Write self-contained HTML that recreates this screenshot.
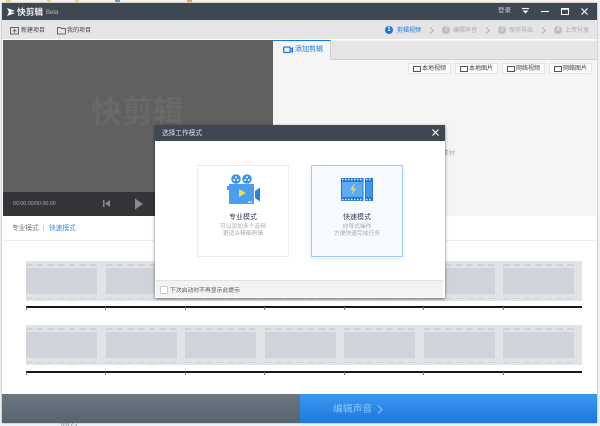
<!DOCTYPE html>
<html lang="zh">
<head>
<meta charset="utf-8">
<style>
html,body{margin:0;padding:0;width:600px;height:426px;overflow:hidden;background:#f1f2f3}
body{position:relative;font-family:"Liberation Sans","Noto Sans CJK SC",sans-serif;font-size:8px;color:#555}
.a{position:absolute}
.t{position:absolute;white-space:nowrap;line-height:10px}
.btn{position:absolute;top:63px;height:9px;background:#fbfbfb;border:1px solid #e4e4e4;width:41px}
.btn span{position:absolute;left:13px;top:1px;font-size:6px;line-height:9px;color:#444;white-space:nowrap}
.btn i{position:absolute;left:4px;top:2px;width:6px;height:4px;border:1px solid #555}
.step{position:absolute;top:26px;width:8px;height:8px;border-radius:50%;background:#bdbdbd;color:#eee;font-size:6px;line-height:8px;text-align:center}
.sl{position:absolute;top:26px;font-size:6px;line-height:10px;color:#aaa;white-space:nowrap}
.chev{position:absolute;top:28px;width:4px;height:4px;border-top:1px solid #b0b0b0;border-right:1px solid #b0b0b0;transform:rotate(45deg)}
.strip{position:absolute;left:26px;width:556px;height:40px;background:#e1e4e6;overflow:hidden}
.strip .f{position:absolute;top:7px;width:71px;height:26px;background:#d0d4da}
.strip .f::before,.strip .f::after{content:"";position:absolute;left:0;width:71px;height:1.500px;background:repeating-linear-gradient(90deg,#ced2d6 0 6.300px,transparent 6.300px 10.700px)}
.strip .f::before{top:-4px}
.strip .f::after{bottom:-5px}
.line{position:absolute;left:26px;width:556px;height:1.500px;background:#15181d}
.tick{position:absolute;width:1px;height:3px;background:#777}
.card{position:absolute;top:165px;width:92px;height:92px;box-sizing:border-box}
</style>
</head>
<body>
<!-- browser strip behind -->
<div class="a" style="left:0;top:0;width:600px;height:3px;background:#f4f2ea"></div>
<div class="a" style="left:6px;top:0;width:5px;height:2px;background:#f0d488"></div>
<div class="a" style="left:47px;top:0;width:4px;height:2px;background:#f0d488"></div>
<div class="a" style="left:75px;top:0;width:4px;height:2px;background:#f0d488"></div>
<div class="a" style="left:115px;top:0;width:5px;height:2px;background:#5a9be0"></div>
<div class="a" style="left:187px;top:0;width:5px;height:2px;background:#e6a75c"></div>
<div class="t" style="left:60px;top:421px;font-size:6px;color:#666">2017 &#8250;</div>

<!-- window -->
<div class="a" style="left:2px;top:3px;width:595px;height:420px;background:#fff;box-shadow:0 0 1.500px #888"></div>

<!-- title bar -->
<div class="a" style="left:2px;top:3px;width:595px;height:17px;background:#3f4852"></div>
<svg class="a" style="left:7px;top:8px" width="9" height="8" viewBox="0 0 9 8"><path d="M0 0l8 3-5 1 5 1-8 3 2-4z" fill="#fff"/></svg>
<div class="t" style="left:17px;top:7px;font-size:8.700px;font-weight:bold;color:#eee;line-height:10px">快剪辑</div>
<div class="t" style="left:46px;top:8px;font-size:6px;color:#bbb">Beta</div>
<div class="t" style="left:498px;top:6px;font-size:6.500px;color:#ccc">登录</div>
<svg class="a" style="left:520px;top:5px" width="77" height="13" viewBox="0 0 77 13" fill="none" stroke="#fff">
<path d="M2 3.500h7" stroke-width="1.100"/><path d="M2.500 5.500h6l-3 3z" fill="#fff" stroke="none"/>
<path d="M21 6.500h8" stroke-width="1.100"/>
<rect x="41.500" y="3.500" width="7" height="6" stroke-width="1"/><path d="M41 4h8" stroke-width="1.500"/>
<path d="M61.500 3.500l6 6M67.500 3.500l-6 6" stroke-width="1.100"/>
</svg>

<!-- toolbar -->
<div class="a" style="left:2px;top:20px;width:595px;height:19px;background:#e5e5e5"></div>
<svg class="a" style="left:10px;top:26px" width="60" height="9" viewBox="0 0 60 9" fill="none" stroke="#666"><rect x=".5" y="1.500" width="8" height="6.500"/><path d="M2.500 4.700h4M4.500 2.800v4"/><path d="M47.500 1.500h3l1 1h4v5.500h-8z"/></svg>
<div class="t" style="left:21px;top:26px;font-size:6px;color:#444">新建项目</div>
<div class="t" style="left:67px;top:26px;font-size:6px;color:#444">我的项目</div>

<div class="step" style="left:385px;background:#1678e0;color:#fff;font-weight:bold">1</div>
<div class="sl" style="left:397px;color:#1678e0">剪辑视频</div>
<div class="chev" style="left:428px"></div>
<div class="step" style="left:442px">2</div>
<div class="sl" style="left:453px">编辑声音</div>
<div class="chev" style="left:484px"></div>
<div class="step" style="left:498px">3</div>
<div class="sl" style="left:509px">保存导出</div>
<div class="chev" style="left:540px"></div>
<div class="step" style="left:554px">4</div>
<div class="sl" style="left:565px">上传分享</div>

<!-- video panel -->
<div class="a" style="left:3px;top:40px;width:270px;height:152px;background:#606060"></div>
<div class="t" style="left:91px;top:96px;font-size:31px;line-height:34px;font-weight:bold;color:#696969">快剪辑</div>
<div class="a" style="left:3px;top:192px;width:270px;height:24px;background:#333538"></div>
<div class="t" style="left:13px;top:199px;font-size:5.300px;color:#aaa">00:00.00/00:00.00</div>
<svg class="a" style="left:102px;top:198px" width="44" height="12" viewBox="0 0 44 12" fill="#8a8a8a"><path d="M1 2h1.500v7H1zM8 2v7L3 5.500z"/><path d="M33 .5l8 5.500-8 5.500z"/></svg>

<!-- right panel -->
<div class="a" style="left:273px;top:40px;width:324px;height:176px;background:#f5f5f5"></div>
<div class="a" style="left:273px;top:41px;width:324px;height:18px;background:#e6e6e6;border-bottom:1px solid #cfcfcf"></div>
<div class="a" style="left:273px;top:40px;width:58px;height:20px;background:#f5f5f5;border-top:1px solid #1678e0;border-right:1px solid #cfcfcf;box-sizing:border-box"></div>
<svg class="a" style="left:283px;top:46px" width="10" height="8" viewBox="0 0 10 8" fill="none" stroke="#1678e0" stroke-width="1.300"><rect x=".7" y="1" width="6.500" height="5.500" rx="1"/><path d="M8 3l1.500-1v4L8 5"/></svg>
<div class="t" style="left:295px;top:45px;font-size:7px;color:#1678e0">添加剪辑</div>

<div class="btn" style="left:408px"><i></i><span>本地视频</span></div>
<div class="btn" style="left:455px"><i></i><span>本地图片</span></div>
<div class="btn" style="left:502px"><i></i><span>网络视频</span></div>
<div class="btn" style="left:549px"><i></i><span>网络图片</span></div>
<div class="t" style="left:443px;top:149px;font-size:6px;color:#aaa">素材</div>

<!-- mode tabs -->
<div class="t" style="left:12px;top:224px;font-size:6.700px;color:#777">专业模式</div>
<div class="a" style="left:43px;top:225px;width:1px;height:6px;background:#ccc"></div>
<div class="t" style="left:49px;top:224px;font-size:6.700px;color:#3b8fe8">快速模式</div>
<div class="a" style="left:3px;top:240px;width:594px;height:1px;background:#eee"></div>

<!-- timeline 1 -->
<div class="strip" style="top:261px">
<div class="f" style="left:0"></div><div class="f" style="left:79.500px"></div><div class="f" style="left:159px"></div><div class="f" style="left:238.500px"></div><div class="f" style="left:318px"></div><div class="f" style="left:397.500px"></div><div class="f" style="left:477px"></div>
</div>
<div class="line" style="top:306px"></div>
<div class="tick" style="left:26px;top:307px"></div><div class="tick" style="left:105px;top:307px"></div><div class="tick" style="left:185px;top:307px"></div><div class="tick" style="left:264px;top:307px"></div><div class="tick" style="left:344px;top:307px"></div><div class="tick" style="left:423px;top:307px"></div><div class="tick" style="left:503px;top:307px"></div>

<!-- timeline 2 -->
<div class="strip" style="top:325px">
<div class="f" style="left:0"></div><div class="f" style="left:79.500px"></div><div class="f" style="left:159px"></div><div class="f" style="left:238.500px"></div><div class="f" style="left:318px"></div><div class="f" style="left:397.500px"></div><div class="f" style="left:477px"></div>
</div>
<div class="line" style="top:371px"></div>
<div class="tick" style="left:26px;top:372px"></div><div class="tick" style="left:105px;top:372px"></div><div class="tick" style="left:185px;top:372px"></div><div class="tick" style="left:264px;top:372px"></div><div class="tick" style="left:344px;top:372px"></div><div class="tick" style="left:423px;top:372px"></div><div class="tick" style="left:503px;top:372px"></div>

<!-- bottom bar -->
<div class="a" style="left:2px;top:394px;width:298px;height:29px;background:linear-gradient(#6b7783,#57636f)"></div>
<div class="a" style="left:300px;top:394px;width:297px;height:29px;background:linear-gradient(#3a98f2,#1f78dc)"></div>
<div class="t" style="left:333px;top:404px;font-size:9.800px;line-height:12px;color:#8fc6f7">编辑声音</div>
<svg class="a" style="left:377px;top:405px" width="6" height="9" viewBox="0 0 6 9" fill="none" stroke="#8fc6f7"><path d="M1 .5l4 4-4 4"/></svg>

<!-- modal -->
<div class="a" style="left:155px;top:125px;width:290px;height:173px;background:#fff;box-shadow:0 1px 3px rgba(0,0,0,.55)"></div>
<div class="a" style="left:155px;top:125px;width:290px;height:16px;background:#3f4852"></div>
<div class="t" style="left:162px;top:129px;font-size:6.700px;color:#dde">选择工作模式</div>
<svg class="a" style="left:431px;top:128px" width="9" height="9" viewBox="0 0 9 9" stroke="#fff" stroke-width="1.100"><path d="M1.500 1.500l6 6M7.500 1.500l-6 6"/></svg>

<div class="card" style="left:197px;background:#fff;border:1px solid #e7edf2"></div>
<div class="card" style="left:311px;background:#f6fafe;border:1px solid #9cccf6;box-shadow:0 2px 5px rgba(120,160,200,.2)"></div>

<svg class="a" style="left:226px;top:174px" width="35" height="31" viewBox="0 0 35 31">
<circle cx="10" cy="5" r="4.800" fill="#3b93ea"/><circle cx="21" cy="5" r="4.800" fill="#3b93ea"/>
<g fill="#fff"><circle cx="10" cy="3.300" r="1"/><circle cx="8.200" cy="6" r="1"/><circle cx="11.800" cy="6" r="1"/><circle cx="21" cy="3.300" r="1"/><circle cx="19.200" cy="6" r="1"/><circle cx="22.800" cy="6" r="1"/></g>
<path d="M1 12h2v-2h25v20H3V16H1z" fill="#4a9df0"/>
<path d="M29 17l5-3.500v14L29 24z" fill="#2a7fdc"/>
<path d="M13 15l7 4-7 4z" fill="#f6dc3e"/>
<rect x="22" y="27.500" width="4" height="1" fill="#fff"/>
</svg>

<svg class="a" style="left:341px;top:178px" width="33" height="23" viewBox="0 0 33 23">
<rect x="0" y="0" width="22.500" height="23" fill="#2478d4"/><rect x="24" y="0" width="8" height="23" fill="#2478d4"/>
<rect x="1" y="4" width="20.500" height="15" fill="#5cabf3"/><rect x="25" y="4" width="6" height="15" fill="#3f97ec"/>
<path d="M1 1.500h20.500M1 21.500h20.500M25 1.500h6M25 21.500h6" stroke="#dcebfa" stroke-width="1.500" stroke-dasharray="1.500 1.500"/>
<path d="M13 6l-4 6h3l-1.500 5 4.500-6.500h-3l1.500-4.500z" fill="#f6dc3e"/>
</svg>

<div class="t" style="left:197px;top:213px;width:92px;text-align:center;font-size:7px;color:#333f50">专业模式</div>
<div class="t" style="left:197px;top:224px;width:92px;text-align:center;font-size:5.750px;line-height:7px;color:#aaa">可以添加多个音频<br>更适合精细剪辑</div>
<div class="t" style="left:311px;top:213px;width:92px;text-align:center;font-size:7px;color:#333f50">快速模式</div>
<div class="t" style="left:311px;top:224px;width:92px;text-align:center;font-size:5.750px;line-height:7px;color:#aaa">向导式操作<br>方便快速完成任务</div>

<div class="a" style="left:156px;top:280px;width:287px;height:17px;background:#f3f3f3;border-top:1px solid #e2e2e2;box-sizing:border-box"></div>
<div class="a" style="left:160px;top:286px;width:6px;height:6px;background:#fff;border:1px solid #ccc;border-radius:1px"></div>
<div class="t" style="left:170px;top:286px;font-size:5.830px;color:#555">下次启动时不再显示此提示</div>
</body>
</html>
